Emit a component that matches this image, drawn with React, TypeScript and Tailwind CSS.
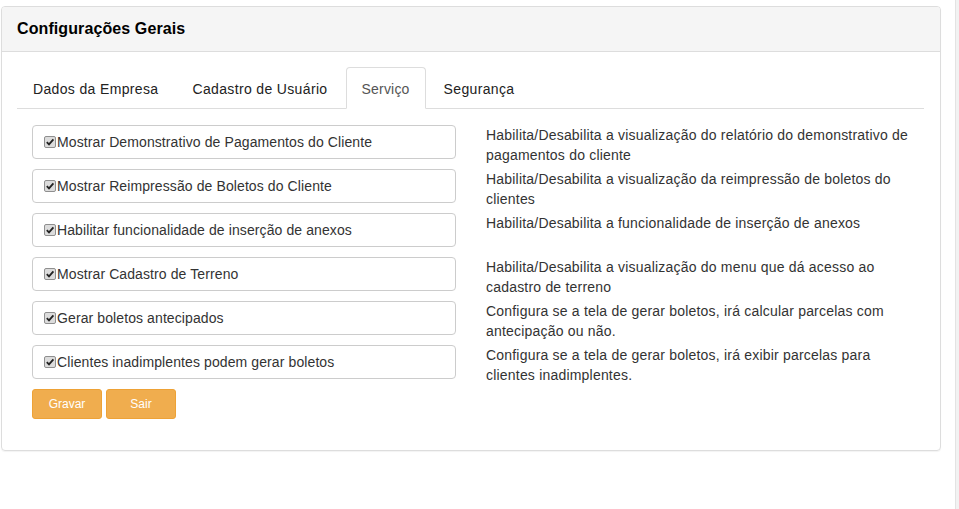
import React from 'react';

const opcoes = [
    { label: 'Mostrar Demonstrativo de Pagamentos do Cliente', desc: 'Habilita/Desabilita a visualização do relatório do demonstrativo de pagamentos do cliente' },
    { label: 'Mostrar Reimpressão de Boletos do Cliente', desc: 'Habilita/Desabilita a visualização da reimpressão de boletos do clientes' },
    { label: 'Habilitar funcionalidade de inserção de anexos', desc: 'Habilita/Desabilita a funcionalidade de inserção de anexos' },
    { label: 'Mostrar Cadastro de Terreno', desc: 'Habilita/Desabilita a visualização do menu que dá acesso ao cadastro de terreno' },
    { label: 'Gerar boletos antecipados', desc: 'Configura se a tela de gerar boletos, irá calcular parcelas com antecipação ou não.' },
    { label: 'Clientes inadimplentes podem gerar boletos', desc: 'Configura se a tela de gerar boletos, irá exibir parcelas para clientes inadimplentes.' },
];

const abas = ['Dados da Empresa', 'Cadastro de Usuário', 'Serviço', 'Segurança'];

const Check: React.FC = () => (
    <span className="inline-flex w-[12px] h-[12px] mr-[1px] items-center justify-center rounded-[2px] border border-[#8f8f8f] bg-[#dcdcdc] shrink-0">
        <svg width="10" height="10" viewBox="0 0 10 10">
            <path d="M1.8 5.2 L4 7.4 L8.4 2.4" stroke="#222" strokeWidth="1.8" fill="none" />
        </svg>
    </span>
);

export default function App() {
    return (
        <div className="flex w-full h-[509px] bg-white text-[#333] text-[14px] leading-[20px]" style={{ fontFamily: '"Liberation Sans", Arial, sans-serif' }}>
            <div className="flex-1 pt-[6px] pl-[1px]">
                <div className="w-[940px] border border-[#ddd] rounded-[4px] shadow-[0_1px_1px_rgba(0,0,0,0.05)]">
                    <div className="h-[45px] bg-[#f5f5f5] border-b border-[#ddd] rounded-t-[3px] px-[15px] flex items-center">
                        <h3 className="text-[16px] font-bold text-black tracking-[0.1px]">Configurações Gerais</h3>
                    </div>
                    <div className="px-[15px] pt-[15px] pb-[31px]">
                        <ul className="flex border-b border-[#ddd] mr-[1px] tracking-[0.35px]">
                            {abas.map((aba) => (
                                <li key={aba} className="mr-[2px] -mb-[1px]">
                                    {aba === 'Serviço' ? (
                                        <span className="block px-[15px] pt-[11px] pb-[9px] border border-[#ddd] border-b-transparent rounded-t-[4px] bg-white text-[#555] tracking-[0.2px]">{aba}</span>
                                    ) : (
                                        <span className="block px-[15px] pt-[11px] pb-[9px] border border-transparent text-[#222]">{aba}</span>
                                    )}
                                </li>
                            ))}
                        </ul>
                        <div className="pt-[16px]">
                            {opcoes.map((o) => (
                                <div key={o.label} className="flex h-[44px]">
                                    <div className="w-1/2 px-[15px]">
                                        <label className="flex items-center h-[34px] px-[11px] border border-[#ccc] rounded-[4px] tracking-[0.1px]">
                                            <Check />
                                            {o.label}
                                        </label>
                                    </div>
                                    <div className="w-1/2 px-[15px] text-[#333] tracking-[0.2px]">{o.desc}</div>
                                </div>
                            ))}
                            <div className="px-[15px] flex gap-[4px]">
                                <button className="w-[70px] h-[30px] bg-[#f0ad4e] border border-[#eea236] rounded-[3px] text-white text-[12px]">Gravar</button>
                                <button className="w-[70px] h-[30px] bg-[#f0ad4e] border border-[#eea236] rounded-[3px] text-white text-[12px]">Sair</button>
                            </div>
                        </div>
                    </div>
                </div>
            </div>
            <div className="w-[4px] bg-[#f2f2f2] border-l border-[#e3e3e3]" />
        </div>
    );
}
